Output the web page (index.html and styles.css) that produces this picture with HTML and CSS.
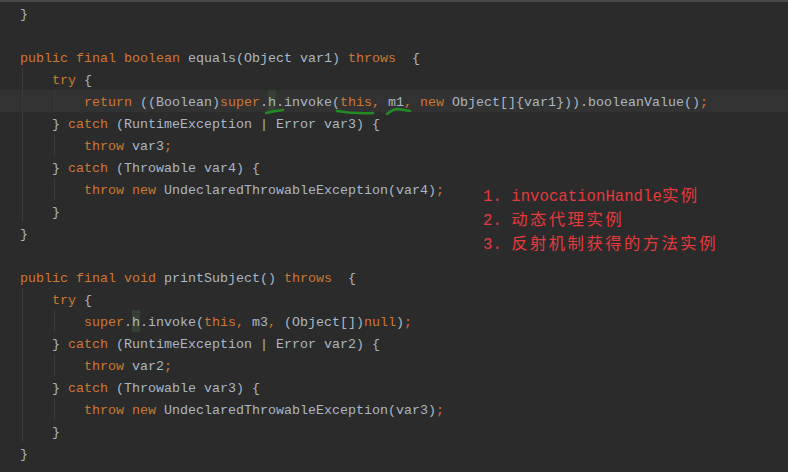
FILE: index.html
```html
<!DOCTYPE html>
<html>
<head>
<meta charset="utf-8">
<link rel="stylesheet" href="styles.css">
</head>
<body>
<div class="editor">
  <div class="line">}</div>
  <div class="line"></div>
  <div class="line"><span class="k">public final boolean</span> equals(Object var1) <span class="k">throws</span>  {</div>
  <div class="line g1">    <span class="k">try</span> {</div>
  <div class="line g2 current">        <span class="k">return</span> ((Boolean)<span class="k">super</span>.<span class="hl">h</span>.invoke(<span class="k">this, </span>m1<span class="k">, new</span> Object[]{var1})).booleanValue()<span class="k">;</span></div>
  <div class="line g1">    } <span class="k">catch</span> (RuntimeException | Error var3) {</div>
  <div class="line g2">        <span class="k">throw</span> var3<span class="k">;</span></div>
  <div class="line g1">    } <span class="k">catch</span> (Throwable var4) {</div>
  <div class="line g2">        <span class="k">throw new</span> UndeclaredThrowableException(var4)<span class="k">;</span></div>
  <div class="line g1">    }</div>
  <div class="line">}</div>
  <div class="line"></div>
  <div class="line"><span class="k">public final void</span> printSubject() <span class="k">throws</span>  {</div>
  <div class="line g1">    <span class="k">try</span> {</div>
  <div class="line g2">        <span class="k">super</span>.<span class="hl">h</span>.invoke(<span class="k">this, </span>m3<span class="k">, </span>(Object[])<span class="k">null</span>)<span class="k">;</span></div>
  <div class="line g1">    } <span class="k">catch</span> (RuntimeException | Error var2) {</div>
  <div class="line g2">        <span class="k">throw</span> var2<span class="k">;</span></div>
  <div class="line g1">    } <span class="k">catch</span> (Throwable var3) {</div>
  <div class="line g2">        <span class="k">throw new</span> UndeclaredThrowableException(var3)<span class="k">;</span></div>
  <div class="line g1">    }</div>
  <div class="line">}</div>

  <svg class="marks" width="788" height="472" viewBox="0 0 788 472">
    <path d="M266 113 Q274 111 283 110"/>
    <path d="M337 111 Q355 114 373 113"/>
    <path d="M387 114 Q393 109 398 109 Q404 110 410 111"/>
  </svg>

  <div class="note">
    <div class="note-line">1. invocationHandle<span class="cjk">实例</span></div>
    <div class="note-line">2. <span class="cjk">动态代理实例</span></div>
    <div class="note-line">3. <span class="cjk">反射机制获得的方法实例</span></div>
  </div>
</div>
</body>
</html>
```
FILE: styles.css
```css
html, body {
  margin: 0;
  padding: 0;
  background: #2b2b2b;
  overflow: hidden;
}

.editor {
  position: relative;
  width: 788px;
  height: 470px;
  border-top: 2px solid #4a4a4a;
  background: #2b2b2b;
  font-family: "Liberation Mono", monospace;
  font-size: 13.333px;
  color: #a9b7c6;
}

.line {
  height: 22px;
  line-height: 25px;
  padding-left: 20px;
  white-space: pre;
  background-repeat: no-repeat;
}

.g1 {
  background-image: linear-gradient(#3a3a3a, #3a3a3a);
  background-size: 1px 100%;
  background-position: 22px 0;
}

.g2 {
  background-image: linear-gradient(#3a3a3a, #3a3a3a), linear-gradient(#3a3a3a, #3a3a3a);
  background-size: 1px 100%, 1px 100%;
  background-position: 22px 0, 54px 0;
}

.current {
  background-color: #323232;
}

.k {
  color: #cc7832;
}

.hl {
  display: inline-block;
  height: 22px;
  line-height: 25px;
  vertical-align: top;
  background: #344134;
}

.marks {
  position: absolute;
  left: 0;
  top: -2px;
  pointer-events: none;
}

.marks path {
  fill: none;
  stroke: #238b23;
  stroke-width: 2.5;
  stroke-linecap: round;
}

.note {
  position: absolute;
  left: 483px;
  top: 182px;
  color: #e43a3d;
  font-family: "Liberation Mono", "Noto Sans CJK SC", monospace;
  font-size: 15.7px;
}

.note-line {
  height: 24px;
  line-height: 24px;
  white-space: pre;
}

.cjk {
  font-family: "Noto Sans CJK SC", sans-serif;
  font-size: 16.4px;
  letter-spacing: 2.4px;
  line-height: 20px;
}
```
